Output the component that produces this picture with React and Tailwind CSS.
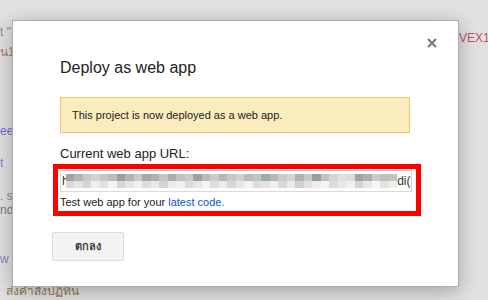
import React from "react";

const row1 = ["#a3a39f","#b5b5b3","#c9c9c7","#cfd2d2","#c3c7c6","#b9bdbc","#9d9d9b","#b3b3b1","#cacaca","#a7a7a5","#b1b1b1","#c5c5c3","#a9adac","#c1c1bf","#cbcbc9","#a19dab","#b9b9b7","#c9cdc9","#b5b5b3","#c7c9c9","#d1d1cf","#b7bbbf","#c3c5c3","#9eaab2","#b3b7b5","#c9cbc9","#d3d5d5","#b3b1ab","#c7c7c5","#929ea8","#bfc1c1","#d5d5d5","#e1dfe3","#dcdcdc","#a6a29c","#aeaeac","#c9cbc9","#c1c1bb","#c3c3bf"];
const row2 = ["#d9d9d9","#e3e3e3","#d5d5d5","#eeeeee","#e1e1e1","#f3f3f3","#d7d7d7","#e5e5e5","#efefef","#dddddd","#e9e9e9","#d3d3d3","#eaeaea","#f1f1f1","#dadada","#e7e7e7","#f5f5f5","#dedede","#ebebeb","#d6d6d6","#e6e6e6","#f2f2f2","#dcdcdc","#e4e4e4","#efefef","#d8d8d8","#e9e9e9","#cfcfcf","#e2e2e2","#ececec","#f4f4f4","#dbdbdb","#e7e7e7","#f0f0f0","#d4d4d4","#e6e6e6","#f6f6f6","#e3e3e3","#eeeeee"];

export default function App() {
  return (
    <div className="relative w-[488px] h-[300px] overflow-hidden bg-[#e1e1e1] font-['Liberation_Sans',Arial,sans-serif]">
      {/* page content behind the modal */}
      <div className="flex w-full h-full text-[12px] leading-[12px] whitespace-nowrap">
        <div className="flex flex-col w-[40px]">
          <div className="mt-[26px] text-[#8a7cab]">t "</div>
          <div className="mt-[8px] text-[#b46e5f]">น1</div>
          <div className="mt-[67px] text-[#6b6cce]">ee</div>
          <div className="mt-[20px] text-[#6b8ad0]">t</div>
          <div className="mt-[21px] text-[#858585]">. s</div>
          <div className="mt-[2px] text-[#7a7a7a]">nd</div>
          <div className="mt-[37px] text-[#9b7bb0]">w <span className="text-[#e0d29a]">|</span></div>
          <div className="mt-[20px] flex items-end text-[#9c7448]">
            <span className="inline-block w-[4px] h-[6px] mb-[2px] bg-[#9ec3de]" />
            <span className="ml-[6px]">ส่งคำสั่งปฏิทิน</span>
          </div>
        </div>
        <div className="ml-auto mt-[32px] w-[29px] text-[#b85566]">VEX1K</div>
      </div>

      {/* modal dialog */}
      <div className="absolute left-[12px] top-[20px] w-[447px] h-[267px] bg-white border border-[#acacac] shadow-[0_4px_18px_rgba(0,0,0,0.28)] text-[#222]">
        <div className="flex flex-col items-start pl-[47px] pt-[37px]">
          <div className="text-[16px] leading-[20px]">Deploy as web app</div>
          <div className="mt-[19px] w-[350px] h-[36px] flex items-center pl-[11px] bg-[#f9edbe] border border-[#f0c36d] text-[11px]">
            This project is now deployed as a web app.
          </div>
          <div className="mt-[13px] text-[13px] leading-[16px]">Current web app URL:</div>
          <div className="mt-[8px] w-[352px] h-[22px] flex items-center border border-[#d9d9d9] border-t-[#c0c0c0] pl-[1px] text-[12px] text-[#333]">
            <span className="mr-[-3px]">h</span>
            <div className="relative flex flex-col">
              <div className="flex">
                {row1.map((c, i) => (
                  <div key={i} className="w-[8.5px] h-[7px]" style={{ backgroundColor: c }} />
                ))}
              </div>
              <div className="flex">
                {row2.map((c, i) => (
                  <div key={i} className="w-[8.5px] h-[7px]" style={{ backgroundColor: c }} />
                ))}
              </div>
            </div>
            <span className="text-[#2c3a2c]">di(</span>
          </div>
          <div className="mt-[3px] text-[11px] leading-[14px]">
            Test web app for your <span className="text-[#1155cc]">latest code.</span>
          </div>
          <button className="mt-[23px] ml-[-8px] w-[72px] h-[29px] flex items-center justify-center rounded-[2px] border border-[#dcdcdc] bg-[#f3f3f3] text-[11px] font-bold text-[#444]">
            ตกลง
          </button>
        </div>

        {/* close icon */}
        <svg className="absolute left-[414px] top-[17px]" width="10" height="10" viewBox="0 0 10 10">
          <path d="M1 1L9 9M9 1L1 9" stroke="#777" strokeWidth="2" />
        </svg>

        {/* red annotation box */}
        <div className="absolute left-[40px] top-[143px] w-[368px] h-[52px] border-[5px] border-[#ff0000]" />
      </div>
    </div>
  );
}
